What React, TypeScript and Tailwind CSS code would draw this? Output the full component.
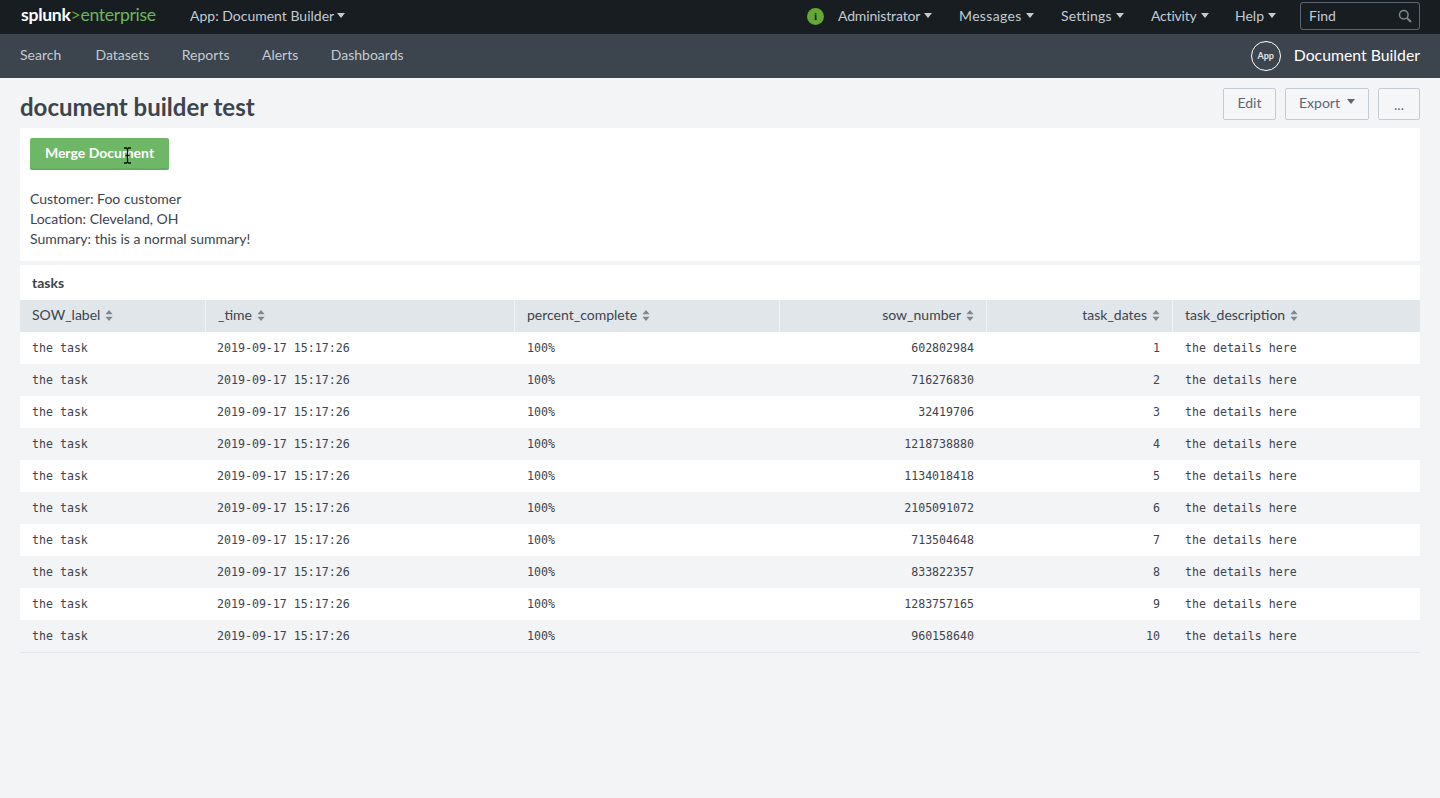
import React from "react";

const sans = "font-['Lato','Noto_Sans',sans-serif]";

const Caret = ({ gap = "ml-[4px]" }: { gap?: string }) => (
  <svg width="8" height="5" viewBox="0 0 8 5" className={`inline-block ${gap} mb-[2px]`}>
    <path d="M0 0h8L4 5z" fill="currentColor" />
  </svg>
);

const SortIcon = () => (
  <svg width="8" height="11" viewBox="0 0 8 11" className="inline-block ml-[5px] shrink-0">
    <path d="M4 0l3.6 4.3H.4zM4 11L.4 6.7h7.2z" fill="#7f8791" />
  </svg>
);

const numbers = [602802984, 716276830, 32419706, 1218738880, 1134018418, 2105091072, 713504648, 833822357, 1283757165, 960158640];

const columns = [
  { label: "SOW_label" },
  { label: "_time" },
  { label: "percent_complete" },
  { label: "sow_number", right: true },
  { label: "task_dates", right: true },
  { label: "task_description" },
];

const menus = [
  { label: "Administrator", cls: "w-[94px] mr-[27px] tracking-[-0.15px]" },
  { label: "Messages", cls: "w-[75px] mr-[27px] tracking-[0.35px]" },
  { label: "Settings", cls: "w-[63px] mr-[27px] tracking-[0.15px]" },
  { label: "Activity", cls: "w-[57px] mr-[27px] tracking-[-0.2px]" },
  { label: "Help", cls: "w-[42px] mr-[23px]" },
];

const gridCols = "grid grid-cols-[186px_309px_265px_207px_186px_247px]";

export default function App() {
  return (
    <div className={`${sans} min-h-[798px] bg-[#f2f4f5] text-[#3c444d] text-[14px]`}>
      {/* top bar */}
      <div className="h-[34px] bg-[#171d21] flex items-center pl-[21px] pr-[20px] pb-[2px] text-[#c3cbd4] text-[14px]">
        <div className="w-[169px] text-[17.6px] tracking-[-0.3px] leading-none mb-[2px]">
          <span className="text-white font-bold">splunk</span>
          <span className="text-[#65a637]">&gt;</span>
          <span className="text-[#6cb560]">enterprise</span>
        </div>
        <div className="pb-[2px]">App: Document Builder<Caret gap="ml-[3px]" /></div>
        <div className="ml-auto flex items-center">
          <div className="w-[17px] h-[17px] rounded-full bg-[#65a637] text-[#171d21] flex items-center justify-center text-[11px] font-bold font-['Liberation_Serif',serif] mr-[14px]">i</div>
          {menus.map((m) => (
            <div key={m.label} className={`${m.cls} pb-[2px] whitespace-nowrap`}>
              {m.label}
              <Caret />
            </div>
          ))}
          <div className="w-[120px] h-[28px] border border-[#5c6773] rounded-[3px] flex items-center justify-between pl-[8px] pr-[7px]">
            <span className="pb-[2px]">Find</span>
            <svg width="14" height="14" viewBox="0 0 14 14" fill="none" stroke="#7f8791" strokeWidth="1.5">
              <circle cx="5.8" cy="5.8" r="4.3" />
              <path d="M9 9l4 4" strokeWidth="2" />
            </svg>
          </div>
        </div>
      </div>

      {/* app bar */}
      <div className="h-[44px] bg-[#3c444d] flex items-center px-[20px] text-[#c3cbd4] text-[14px] gap-[32.5px]">
        <span className="w-[43px] pb-[4px]">Search</span>
        <span className="pb-[4px]">Datasets</span>
        <span className="pb-[4px]">Reports</span>
        <span className="pb-[4px]">Alerts</span>
        <span className="pb-[4px]">Dashboards</span>
        <div className="ml-auto flex items-center gap-[13px] text-white">
          <div className="w-[30px] h-[30px] rounded-full border-[1.5px] border-white flex items-center justify-center text-[9px] font-bold text-[#e1e6eb]">App</div>
          <span className="text-[15.8px] pb-[2px]">Document Builder</span>
        </div>
      </div>

      {/* title row */}
      <div className="h-[50px] flex items-start justify-between pl-[20px] pr-[20px]">
        <h1 className="text-[24px] font-bold text-[#3c444d] mt-[14px] leading-[30px]">document builder test</h1>
        <div className="flex gap-[9px] mt-[10px] text-[14px] text-[#5c6773]">
          <div className="w-[53px] h-[32px] border border-[#c3cbd4] rounded-[2px] bg-[#f5f6f7] flex items-center justify-center pb-[4px]">Edit</div>
          <div className="w-[84px] h-[32px] border border-[#c3cbd4] rounded-[2px] bg-[#f5f6f7] flex items-center justify-center pb-[4px]">Export<Caret gap="ml-[7px]" /></div>
          <div className="w-[42px] h-[32px] border border-[#c3cbd4] rounded-[2px] bg-[#f5f6f7] flex items-center justify-center">...</div>
        </div>
      </div>

      {/* panel */}
      <div className="mx-[20px] bg-white h-[133px] pl-[10px] pt-[10px] relative">
        <div className="w-[139px] h-[32px] bg-[#6db767] rounded-[2px] border-b-2 border-[#63ab5e] text-white font-bold text-[14px] flex items-center justify-center pb-[2px]">
          Merge Document
        </div>
        {/* text cursor */}
        <svg width="9" height="17" viewBox="0 0 9 17" className="absolute left-[103px] top-[19px]" fill="none">
          <path d="M1 1h2.5l1 1 1-1H8M4.5 2v13M1 16h2.5l1-1 1 1H8M2.5 8.5h4" stroke="#111" strokeWidth="1.3" />
        </svg>
        <div className="mt-[19px] leading-[20px] text-[14px]">
          <div>Customer: Foo customer</div>
          <div>Location: Cleveland, OH</div>
          <div>Summary: this is a normal summary!</div>
        </div>
      </div>

      {/* table panel */}
      <div className="mx-[20px] mt-[4px] bg-white border-b border-[#e1e6eb]">
        <div className="h-[35px] pl-[12px] flex items-center font-bold text-[14px]">tasks</div>
        <div className={`${gridCols} h-[32px] bg-[#e1e6eb] text-[14px]`}>
          {columns.map((c, i) => (
            <div
              key={c.label}
              className={`flex items-center px-[12px] pb-[2px] ${c.right ? "justify-end" : ""} ${i < 5 ? "border-r border-[#f2f4f5]" : ""}`}
            >
              <span className="pb-[2px]">{c.label}</span>
              <SortIcon />
            </div>
          ))}
        </div>
        {numbers.map((n, i) => (
          <div
            key={n}
            className={`${gridCols} h-[32px] items-center pt-[2px] font-['DejaVu_Sans_Mono',monospace] text-[11.6px] ${i % 2 ? "bg-[#f2f4f5]" : "bg-white"}`}
          >
            <div className="pl-[12px]">the task</div>
            <div className="pl-[11px]">2019-09-17 15:17:26</div>
            <div className="pl-[12px]">100%</div>
            <div className="pr-[13px] text-right">{n}</div>
            <div className="pr-[13px] text-right">{i + 1}</div>
            <div className="pl-[12px]">the details here</div>
          </div>
        ))}
      </div>
    </div>
  );
}
